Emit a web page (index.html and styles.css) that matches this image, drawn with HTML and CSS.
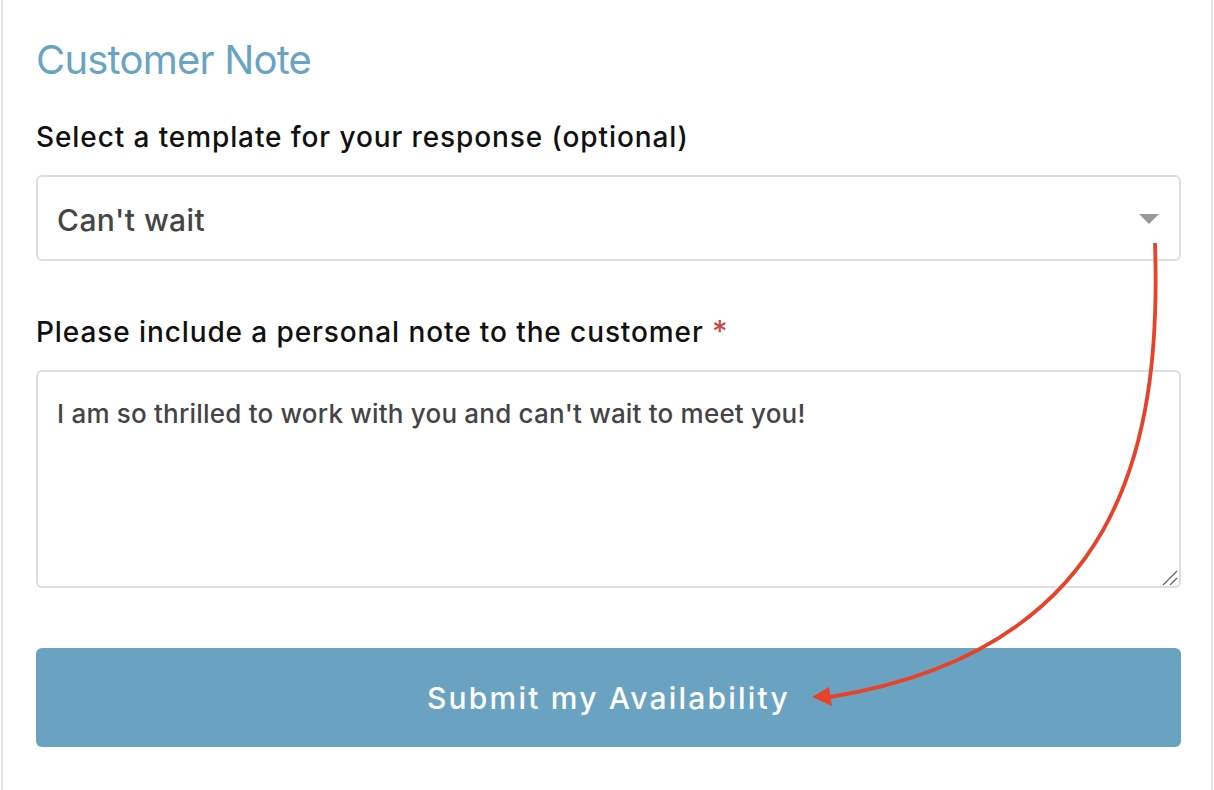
FILE: index.html
```html
<!DOCTYPE html>
<html lang="en">
<head>
    <meta charset="UTF-8">
    <meta name="viewport" content="width=device-width, initial-scale=1.0">
    <title>Customer Note</title>
    <link rel="stylesheet" href="styles.css">
</head>
<body>
    <div class="panel">
        <h2 class="panel-title">Customer Note</h2>

        <label class="field-label" for="template">Select a template for your response (optional)</label>
        <div class="select-wrap">
            <select id="template" class="select">
                <option>Can't wait</option>
                <option>Looking forward</option>
                <option>Thank you</option>
            </select>
            <span class="select-arrow"></span>
        </div>

        <label class="field-label note-label" for="note">Please include a personal note to the customer <span class="required">*</span></label>
        <div class="note-wrap">
            <textarea id="note" class="note">I am so thrilled to work with you and can't wait to meet you!</textarea>
            <svg class="grip" width="16" height="16" viewBox="0 0 16 16">
                <path d="M1 15 L15 1 M8 15 L15 8" stroke="#666" stroke-width="1.3" fill="none"/>
            </svg>
        </div>

        <button class="submit" type="button">Submit my Availability</button>

        <!-- annotation arrow drawn over the form -->
        <svg class="annotation" width="1214" height="790" viewBox="0 0 1214 790">
            <path d="M1155 243 C1162 450 1118 650 830 697" fill="none" stroke="#e8432a" stroke-width="3.8"/>
            <polygon points="812,697 829,687 832,706" fill="#e8432a"/>
        </svg>
    </div>
</body>
</html>
```

FILE: styles.css
```css
body {
    margin: 0;
    background: #fff;
    font-family: 'Inter', 'Liberation Sans', sans-serif;
}
.panel {
    position: relative;
    margin: 0 1px;
    min-height: 790px;
    box-sizing: border-box;
    border-left: 2px solid #e2e2e2;
    border-right: 2px solid #e2e2e2;
    padding: 36px 30px 0 33px;
}
.panel-title {
    margin: 0 0 35px;
    font-size: 40px;
    font-weight: 400;
    line-height: 48px;
    letter-spacing: -0.8px;
    color: #6aa4c3;
}
.field-label {
    display: block;
    font-size: 28px;
    font-weight: 500;
    line-height: 36px;
    letter-spacing: 0.9px;
    color: #111;
    margin-bottom: 20px;
}
.required {
    color: #c94b4b;
    font-size: 30px;
    line-height: 1;
}
.select-wrap {
    position: relative;
}
.select {
    display: block;
    width: 100%;
    height: 86px;
    box-sizing: border-box;
    border: 2px solid #dedede;
    border-radius: 6px;
    background: #fff;
    padding: 4px 19px 0;
    font-family: inherit;
    font-size: 30px;
    font-weight: 500;
    letter-spacing: 0.4px;
    color: #454545;
    appearance: none;
    -webkit-appearance: none;
    outline: none;
}
.select-arrow {
    position: absolute;
    right: 22px;
    top: 39px;
    width: 0;
    height: 0;
    border-left: 10px solid transparent;
    border-right: 10px solid transparent;
    border-top: 10px solid #999;
}
.note-label {
    margin-top: 53px;
}
.note-wrap {
    position: relative;
}
.note {
    display: block;
    width: 100%;
    height: 218px;
    box-sizing: border-box;
    border: 2px solid #dedede;
    border-radius: 6px;
    padding: 25px 19px;
    font-family: inherit;
    font-size: 26px;
    font-weight: 500;
    line-height: 34px;
    letter-spacing: 0.2px;
    color: #454545;
    outline: none;
    resize: none;
}
.grip {
    position: absolute;
    right: 3px;
    bottom: 2px;
    pointer-events: none;
}
.submit {
    display: block;
    width: 100%;
    height: 99px;
    margin-top: 60px;
    border: none;
    border-radius: 6px;
    background: #6aa3c2;
    color: #fff;
    font-family: inherit;
    font-size: 30px;
    font-weight: 500;
    letter-spacing: 2.2px;
    cursor: pointer;
}
.annotation {
    position: absolute;
    left: -3px;
    top: 0;
    pointer-events: none;
}
```
